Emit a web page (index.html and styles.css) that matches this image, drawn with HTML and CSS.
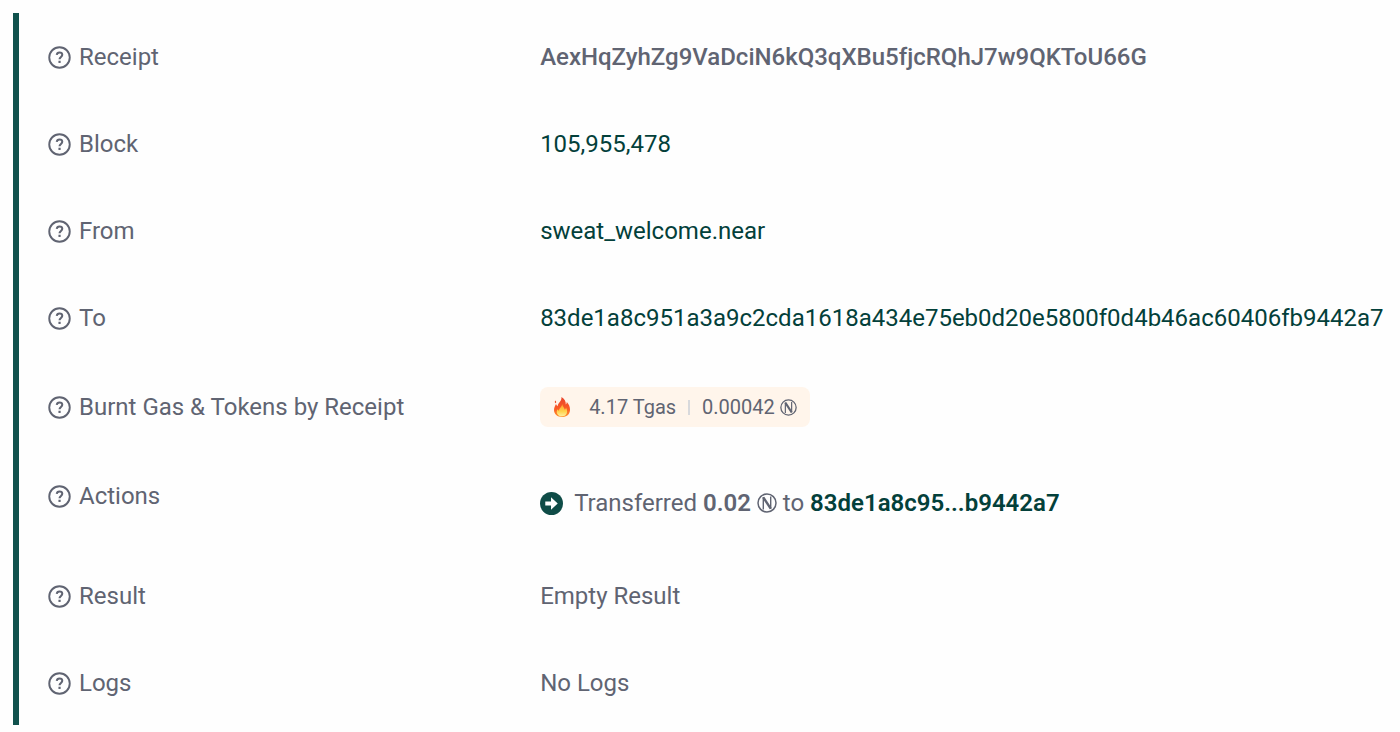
FILE: index.html
```
<!DOCTYPE html>
<html lang="en">
<head>
<meta charset="utf-8">
<meta name="viewport" content="width=device-width, initial-scale=1">
<title>Receipt details</title>
<link rel="stylesheet" href="styles.css">
</head>
<body>
<svg class="symbols" aria-hidden="true">
  <symbol id="help" viewBox="0 0 24 24">
    <circle cx="12" cy="12" r="10.7" fill="none" stroke="currentColor" stroke-width="2"/>
    <path d="M9.100 9.300C9.300 7.600 10.400 6.700 12 6.700c1.700 0 2.900 1 2.900 2.500 0 2.100-2.900 2.300-2.900 4.700" fill="none" stroke="currentColor" stroke-width="2.100"/>
    <rect x="10.900" y="15.400" width="2.300" height="2.300" fill="currentColor"/>
  </symbol>
  <symbol id="near" viewBox="0 0 20 20">
    <g fill="none" stroke="currentColor">
      <circle cx="10" cy="10" r="9" stroke-width="1.500"/>
      <path d="M6.300 16.500V4M13.700 16V3.500" stroke-width="1.400"/>
      <path d="M6.300 4.300L13.700 15.700" stroke-width="2.400"/>
    </g>
  </symbol>
</svg>
<main class="receipt">
  <dl class="rows">
    <div class="row row-first">
      <dt class="label"><svg class="help"><use href="#help"/></svg>Receipt</dt>
      <dd class="value hash">AexHqZyhZg9VaDciN6kQ3qXBu5fjcRQhJ7w9QKToU66G</dd>
    </div>
    <div class="row">
      <dt class="label"><svg class="help"><use href="#help"/></svg>Block</dt>
      <dd class="value"><a class="link" href="#block">105,955,478</a></dd>
    </div>
    <div class="row">
      <dt class="label"><svg class="help"><use href="#help"/></svg>From</dt>
      <dd class="value"><a class="link" href="#from">sweat_welcome.near</a></dd>
    </div>
    <div class="row">
      <dt class="label"><svg class="help"><use href="#help"/></svg>To</dt>
      <dd class="value"><a class="link" href="#to">83de1a8c951a3a9c2cda1618a434e75eb0d20e5800f0d4b46ac60406fb9442a7</a></dd>
    </div>
    <div class="row row-burnt">
      <dt class="label"><svg class="help"><use href="#help"/></svg>Burnt Gas &amp; Tokens by Receipt</dt>
      <dd class="value">
        <div class="badge">
          <svg class="flame" viewBox="0 0 18 20" aria-hidden="true">
            <defs>
              <linearGradient id="outer" x1="0" y1="0" x2="0" y2="1"><stop offset="0" stop-color="#e8442c"/><stop offset=".6" stop-color="#fa5b25"/><stop offset="1" stop-color="#ff9a2e"/></linearGradient>
              <linearGradient id="inner" x1="0" y1="0" x2="0" y2="1"><stop offset="0" stop-color="#ff9b2d"/><stop offset=".6" stop-color="#ffd34d"/><stop offset="1" stop-color="#fff0a0"/></linearGradient>
            </defs>
            <path fill="url(#outer)" d="M8.500 0c3 2 4.500 4.400 4.300 7.500.7-.6 1-1.500 1-2.600 2 2.200 3.400 4.600 3.200 8-.2 4.300-3.400 7.100-7.900 7.100C4.300 20 1 17.200 1 13c0-2.600 1.200-4.200 2-6 .5 1 .8 1.700 1.600 2.300C4.800 6 8.800 4.500 8.500 0zM2.300 3.500c1.200.8 1.200 2 .2 2.800-.8-.8-.9-1.800-.2-2.800z"/>
            <path fill="url(#inner)" d="M9.300 7c.2 2.800 2.100 3.500 2.500 5.700.7-.5 1.100-1.200 1.200-2.200 1.500 2.800 1.600 5.500-.1 7.300-2 2-6 2-8 0-1.400-1.500-1.500-3.600-.5-5.600.5.700 1 1.200 1.600 1.500C6 11 9 9.800 9.300 7z"/>
          </svg>
          <span>4.17 Tgas</span>
          <span class="divider"></span>
          <span class="amount">0.00042 <svg class="near-small" role="img" aria-label="NEAR"><use href="#near"/></svg></span>
        </div>
      </dd>
    </div>
    <div class="row row-actions">
      <dt class="label"><svg class="help"><use href="#help"/></svg>Actions</dt>
      <dd class="value action">
        <svg class="arrow" viewBox="0 0 24 24" aria-hidden="true"><circle cx="12" cy="12" r="12" fill="#0f4c47"/><path d="M5.500 9.800h6V5.500l7 6.500-7 6.500v-4.300h-6z" fill="#fff"/></svg>
        <span class="transfer">Transferred <b>0.02</b> <svg class="near" role="img" aria-label="NEAR"><use href="#near"/></svg> to <a class="link strong" href="#to">83de1a8c95...b9442a7</a></span>
      </dd>
    </div>
    <div class="row">
      <dt class="label"><svg class="help"><use href="#help"/></svg>Result</dt>
      <dd class="value">Empty Result</dd>
    </div>
    <div class="row row-last">
      <dt class="label"><svg class="help"><use href="#help"/></svg>Logs</dt>
      <dd class="value">No Logs</dd>
    </div>
  </dl>
</main>
</body>
</html>
```
FILE: styles.css
```
body {
  margin: 0;
  background: #fefefe;
  color: #606472;
  font-family: Roboto, "Liberation Sans", sans-serif;
  font-size: 24px;
  line-height: 33px;
}
.symbols { position: absolute; width: 0; height: 0; }
.receipt { padding: 13px 0 0 13px; }
.rows { margin: 0; border-left: 6px solid #10524d; }
.row {
  display: grid;
  grid-template-columns: 91fr 159fr;
  padding: 27px 0 27px 29px;
}
.row-first { padding-top: 28px; }
.label { display: flex; align-items: center; gap: 8px; }
.value { margin: 0; min-width: 0; white-space: nowrap; }
.help { width: 23px; height: 23px; flex: none; }
.hash { font-weight: 500; }
.link { color: #03403a; text-decoration: none; }
.strong, b { font-weight: 600; }
.row-burnt { padding-top: 25px; padding-bottom: 26px; }
.badge {
  display: inline-flex;
  align-items: center;
  height: 40px;
  padding: 0 13px;
  border-radius: 8px;
  background: #fff5eb;
  font-size: 20px;
  vertical-align: top;
}
.flame { width: 18px; height: 20px; margin-right: 18px; }
.divider { width: 2px; height: 15px; margin: 0 12px; background: #d8d9dc; }
.near-small { width: 17px; height: 17px; vertical-align: -2px; }
.near { width: 20px; height: 20px; vertical-align: -2px; }
.row-actions { padding-bottom: 33px; }
.row-actions .label { align-self: start; }
.action { display: flex; align-items: center; gap: 11px; padding-top: 7px; }
.arrow { width: 23px; height: 23px; flex: none; }
.row-last { padding-bottom: 25px; }
```
